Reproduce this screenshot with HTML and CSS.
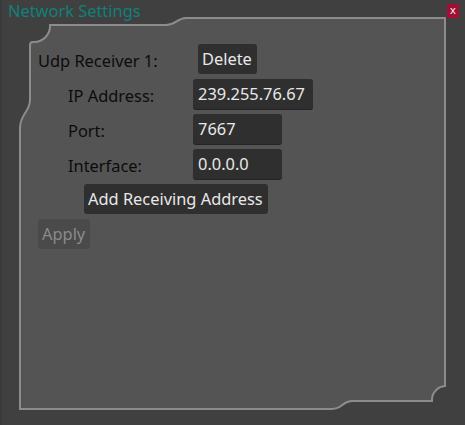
FILE: index.html
```html
<!DOCTYPE html>
<html>
<head>
<meta charset="utf-8">
<link rel="stylesheet" href="styles.css">
</head>
<body>
<div class="window">
  <svg class="frame" width="465" height="425" viewBox="0 0 465 425">
    <path d="M445 18 L186 18 C177 18 176 25 166 25 L50 25 A16 16 0 0 1 34 42 L33 42 Q30 42 30 45 L30 100 C30 112 20 114 20 128 L20 409 L332 409 C343 409 342 401 352 401 L432 401 A14 14 0 0 1 445 386 Z" class="frame-shape"/>
  </svg>
  <div class="titlebar">
    <span class="title">Network Settings</span>
    <span class="close">x</span>
  </div>
  <div class="content">
    <div class="row">
      <span class="label label-main">Udp Receiver 1:</span>
      <span class="btn btn-delete">Delete</span>
    </div>
    <div class="row sub">
      <span class="label label-sub">IP Address:</span>
      <span class="field field-wide">239.255.76.67</span>
    </div>
    <div class="row sub">
      <span class="label label-sub">Port:</span>
      <span class="field">7667</span>
    </div>
    <div class="row sub">
      <span class="label label-sub">Interface:</span>
      <span class="field">0.0.0.0</span>
    </div>
    <div class="row add">
      <span class="btn">Add Receiving Address</span>
    </div>
    <div class="row">
      <span class="btn btn-disabled">Apply</span>
    </div>
  </div>
</div>
</body>
</html>
```
FILE: styles.css
```css
html, body {
  margin: 0;
  padding: 0;
  background: #3f3f3f;
}
body {
  font-family: "Noto Sans", "Open Sans", sans-serif;
  font-size: 16.4px;
}
.window {
  position: relative;
  width: 465px;
  height: 425px;
  box-sizing: border-box;
  background: #404040;
  border-left: 2px solid #3a3a3a;
  overflow: hidden;
}
.frame {
  position: absolute;
  left: -2px;
  top: 0;
}
.frame-shape {
  fill: #545454;
  stroke: #8c8c8c;
  stroke-width: 2;
}
.titlebar {
  position: relative;
  height: 22px;
  display: flex;
  align-items: flex-start;
  justify-content: space-between;
  padding: 0 6px 0 6px;
}
.title {
  color: #0f807b;
  line-height: 22px;
}
.close {
  margin-top: 4px;
  width: 12px;
  height: 14px;
  background: #a30e33;
  color: #f4f4f4;
  font-size: 11px;
  line-height: 12px;
  text-align: center;
}
.content {
  position: relative;
  display: flex;
  flex-direction: column;
  gap: 5px;
  padding: 22px 0 0 36px;
}
.row {
  display: flex;
  align-items: center;
  height: 30px;
}
.sub {
  padding-left: 30px;
}
.add {
  padding-left: 46px;
}
.label {
  color: #0c0c0c;
  padding-top: 3px;
}
.label-main {
  width: 160px;
}
.label-sub {
  width: 125px;
}
.btn {
  box-sizing: border-box;
  height: 30px;
  line-height: 30px;
  padding: 0 5px 0 4px;
  background: #2f2f2f;
  color: #e8e8e8;
  border-radius: 3px;
}
.btn-disabled {
  background: #4a4a4a;
  color: #8b8b8b;
}
.field {
  box-sizing: border-box;
  width: 89px;
  height: 30px;
  line-height: 30px;
  padding: 0 5px;
  background: #2f2f2f;
  color: #e8e8e8;
  border-radius: 3px;
  box-shadow: 0 1px 0 #242424;
}
.field-wide {
  width: 120px;
}
```
